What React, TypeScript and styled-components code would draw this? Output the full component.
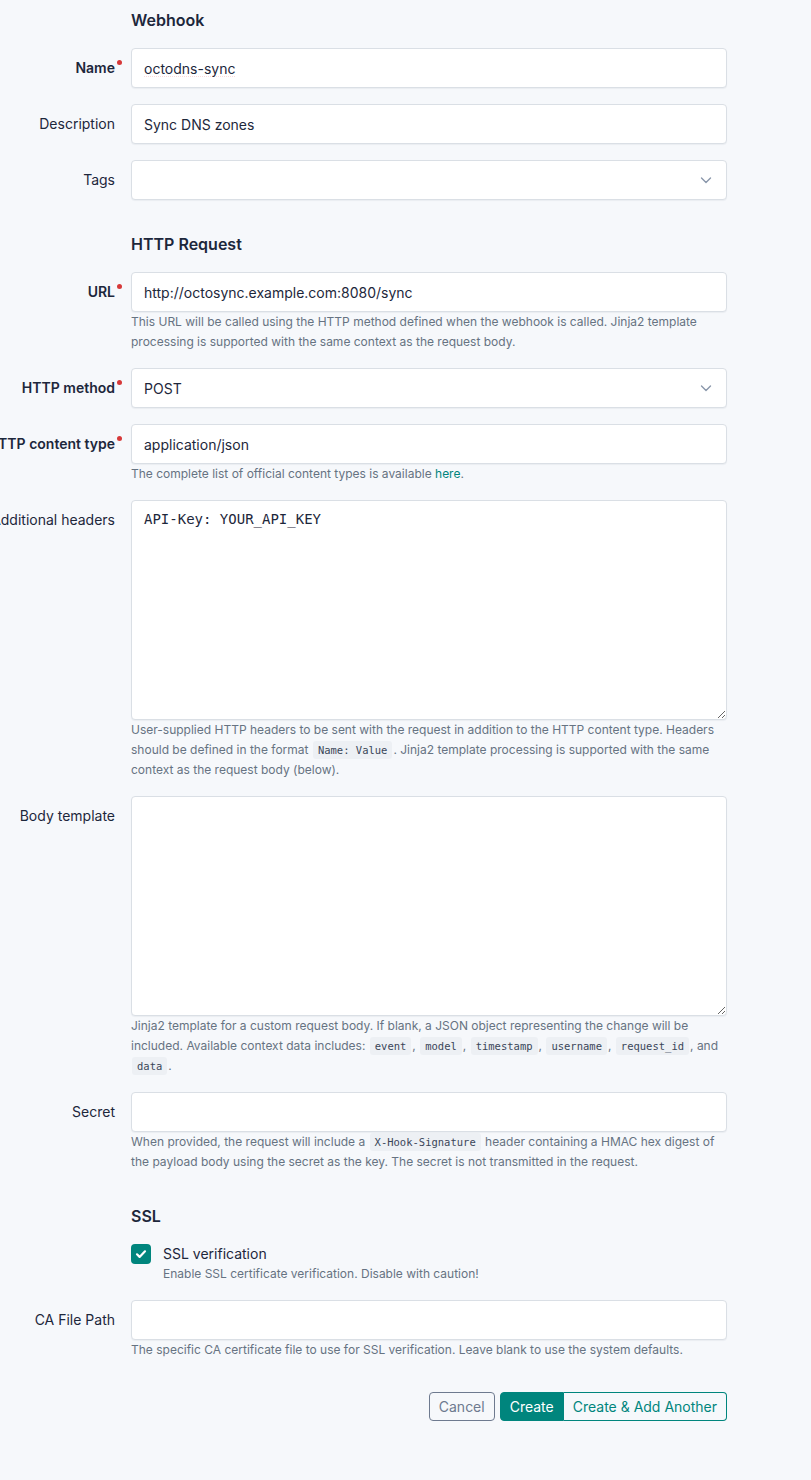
import React from 'react';
import styled, { createGlobalStyle } from 'styled-components';

const GlobalStyle = createGlobalStyle`
  html, body {
    margin: 0;
    padding: 0;
    background: #f6f8fb;
  }
  body {
    font-family: Inter, "Noto Sans", "Liberation Sans", sans-serif;
    color: #1d273b;
    -webkit-font-smoothing: antialiased;
  }
  * {
    box-sizing: border-box;
  }
`;

const Page = styled.div`
  width: 811px;
  min-height: 1480px;
  padding-top: 8px;
  overflow: hidden;
`;

const Form = styled.form`
  width: 727px;
`;

const SectionTitle = styled.h3<{ $first?: boolean }>`
  margin: ${(p) => (p.$first ? '0' : '32px')} 0 16px 131px;
  font-size: 16px;
  line-height: 24px;
  font-weight: 600;
  color: #1d273b;
`;

const Row = styled.div`
  display: grid;
  grid-template-columns: 123px 596px;
  column-gap: 8px;
  margin-bottom: 16px;
`;

const Label = styled.label<{ $required?: boolean }>`
  display: flex;
  justify-content: flex-end;
  padding: 10px 8px 0 0;
  font-size: 14px;
  line-height: 20px;
  white-space: nowrap;
  font-weight: ${(p) => (p.$required ? 600 : 400)};
  color: #1d273b;
`;

const LabelText = styled.span<{ $required?: boolean }>`
  position: relative;
  &::after {
    content: '';
    display: ${(p) => (p.$required ? 'block' : 'none')};
    position: absolute;
    right: -7px;
    top: 2px;
    width: 5px;
    height: 5px;
    border-radius: 50%;
    background: #d63939;
  }
`;

const Field = styled.div`
  display: flex;
  flex-direction: column;
  min-width: 0;
`;

const Input = styled.input<{ $misspelled?: boolean }>`
  width: 100%;
  height: 40px;
  padding: 0 12px;
  border: 1px solid #dadfe5;
  border-radius: 4px;
  background: #ffffff;
  box-shadow: 0 1px 1px rgba(24, 36, 51, 0.05);
  font-family: Inter, "Noto Sans", sans-serif;
  font-size: 14px;
  color: #1d273b;
  outline: none;
  text-decoration: ${(p) => (p.$misspelled ? 'underline dotted #e5484d' : 'none')};
  text-underline-offset: 3px;
`;

const TextArea = styled.textarea`
  width: 100%;
  height: 220px;
  padding: 8px 12px;
  border: 1px solid #dadfe5;
  border-radius: 4px;
  background: #ffffff;
  box-shadow: 0 1px 1px rgba(24, 36, 51, 0.05);
  font-family: "DejaVu Sans Mono", "Liberation Mono", monospace;
  font-size: 14px;
  line-height: 20px;
  color: #1d273b;
  resize: vertical;
  outline: none;
`;

const SelectBox = styled.div`
  display: flex;
  align-items: center;
  justify-content: space-between;
  height: 40px;
  padding: 0 14px 0 12px;
  border: 1px solid #dadfe5;
  border-radius: 4px;
  background: #ffffff;
  box-shadow: 0 1px 1px rgba(24, 36, 51, 0.05);
  font-size: 14px;
  color: #1d273b;
`;

const Chevron = styled.svg`
  width: 12px;
  height: 12px;
  color: #8a97ab;
`;

const Help = styled.div`
  font-size: 12px;
  line-height: 20px;
  color: #667382;
`;

const Code = styled.code`
  font-family: "DejaVu Sans Mono", "Liberation Mono", monospace;
  font-size: 10.5px;
  padding: 3px 5px;
  margin: 0 1px;
  border-radius: 3px;
  background: #edf0f4;
  color: #3a4659;
`;

const Link = styled.a`
  color: #00857d;
  text-decoration: none;
`;

const CheckRow = styled.div`
  display: flex;
  gap: 12px;
`;

const CheckBox = styled.span`
  flex: none;
  display: flex;
  align-items: center;
  justify-content: center;
  width: 20px;
  height: 20px;
  border-radius: 4px;
  background: #00857d;
`;

const CheckText = styled.div`
  display: flex;
  flex-direction: column;
`;

const CheckLabel = styled.span`
  font-size: 14px;
  line-height: 20px;
  color: #1d273b;
`;

const Actions = styled.div`
  display: flex;
  justify-content: flex-end;
  gap: 5px;
  margin-top: 32px;
`;

const Button = styled.button<{ $variant: 'outline' | 'primary' | 'ghost' }>`
  height: 29px;
  padding: 0 9px;
  font-family: Inter, "Noto Sans", sans-serif;
  font-size: 14px;
  border-radius: 4px;
  cursor: pointer;
  border: 1px solid ${(p) => (p.$variant === 'outline' ? '#6e7a8f' : '#00857d')};
  background: ${(p) => (p.$variant === 'primary' ? '#00857d' : 'transparent')};
  color: ${(p) =>
    p.$variant === 'primary' ? '#ffffff' : p.$variant === 'ghost' ? '#00857d' : '#6e7a8f'};
`;

const ButtonGroup = styled.div`
  display: flex;
  & > button:first-child {
    border-top-right-radius: 0;
    border-bottom-right-radius: 0;
  }
  & > button:last-child {
    border-left: none;
    border-top-left-radius: 0;
    border-bottom-left-radius: 0;
  }
`;

const ChevronDown = () => (
  <Chevron viewBox="0 0 12 12" fill="none">
    <path d="M1.5 4l4.5 4.5L10.5 4" stroke="currentColor" strokeWidth="1.4" strokeLinecap="round" strokeLinejoin="round" />
  </Chevron>
);

type FormRowProps = {
  label: string;
  required?: boolean;
  children: React.ReactNode;
};

const FormRow = ({ label, required, children }: FormRowProps) => (
  <Row>
    <Label $required={required}>
      <LabelText $required={required}>{label}</LabelText>
    </Label>
    <Field>{children}</Field>
  </Row>
);

const App = (): JSX.Element => (
  <Page>
    <GlobalStyle />
    <Form onSubmit={(e) => e.preventDefault()}>
      <SectionTitle $first>Webhook</SectionTitle>
      <FormRow label="Name" required>
        <Input defaultValue="octodns-sync" $misspelled />
      </FormRow>
      <FormRow label="Description">
        <Input defaultValue="Sync DNS zones" />
      </FormRow>
      <FormRow label="Tags">
        <SelectBox>
          <span />
          <ChevronDown />
        </SelectBox>
      </FormRow>

      <SectionTitle>HTTP Request</SectionTitle>
      <FormRow label="URL" required>
        <Input defaultValue="http://octosync.example.com:8080/sync" />
        <Help>
          This URL will be called using the HTTP method defined when the webhook is called. Jinja2
          template processing is supported with the same context as the request body.
        </Help>
      </FormRow>
      <FormRow label="HTTP method" required>
        <SelectBox>
          <span>POST</span>
          <ChevronDown />
        </SelectBox>
      </FormRow>
      <FormRow label="HTTP content type" required>
        <Input defaultValue="application/json" />
        <Help>
          The complete list of official content types is available <Link href="#">here</Link>.
        </Help>
      </FormRow>
      <FormRow label="Additional headers">
        <TextArea defaultValue="API-Key: YOUR_API_KEY" />
        <Help>
          User-supplied HTTP headers to be sent with the request in addition to the HTTP content
          type. Headers should be defined in the format <Code>Name: Value</Code>. Jinja2 template
          processing is supported with the same context as the request body (below).
        </Help>
      </FormRow>
      <FormRow label="Body template">
        <TextArea />
        <Help>
          Jinja2 template for a custom request body. If blank, a JSON object representing the change
          will be included. Available context data includes: <Code>event</Code>, <Code>model</Code>,{' '}
          <Code>timestamp</Code>, <Code>username</Code>, <Code>request_id</Code>, and{' '}
          <Code>data</Code>.
        </Help>
      </FormRow>
      <FormRow label="Secret">
        <Input />
        <Help>
          When provided, the request will include a <Code>X-Hook-Signature</Code> header containing a
          HMAC hex digest of the payload body using the secret as the key. The secret is not
          transmitted in the request.
        </Help>
      </FormRow>

      <SectionTitle>SSL</SectionTitle>
      <Row>
        <span />
        <CheckRow>
          <CheckBox>
            <svg width="12" height="12" viewBox="0 0 12 12" fill="none">
              <path d="M2 6.3l2.6 2.6L10 3.3" stroke="#fff" strokeWidth="2.2" strokeLinecap="round" strokeLinejoin="round" />
            </svg>
          </CheckBox>
          <CheckText>
            <CheckLabel>SSL verification</CheckLabel>
            <Help>Enable SSL certificate verification. Disable with caution!</Help>
          </CheckText>
        </CheckRow>
      </Row>
      <FormRow label="CA File Path">
        <Input />
        <Help>
          The specific CA certificate file to use for SSL verification. Leave blank to use the
          system defaults.
        </Help>
      </FormRow>

      <Actions>
        <Button type="button" $variant="outline">Cancel</Button>
        <ButtonGroup>
          <Button type="submit" $variant="primary">Create</Button>
          <Button type="button" $variant="ghost">Create &amp; Add Another</Button>
        </ButtonGroup>
      </Actions>
    </Form>
  </Page>
);

export default App;
